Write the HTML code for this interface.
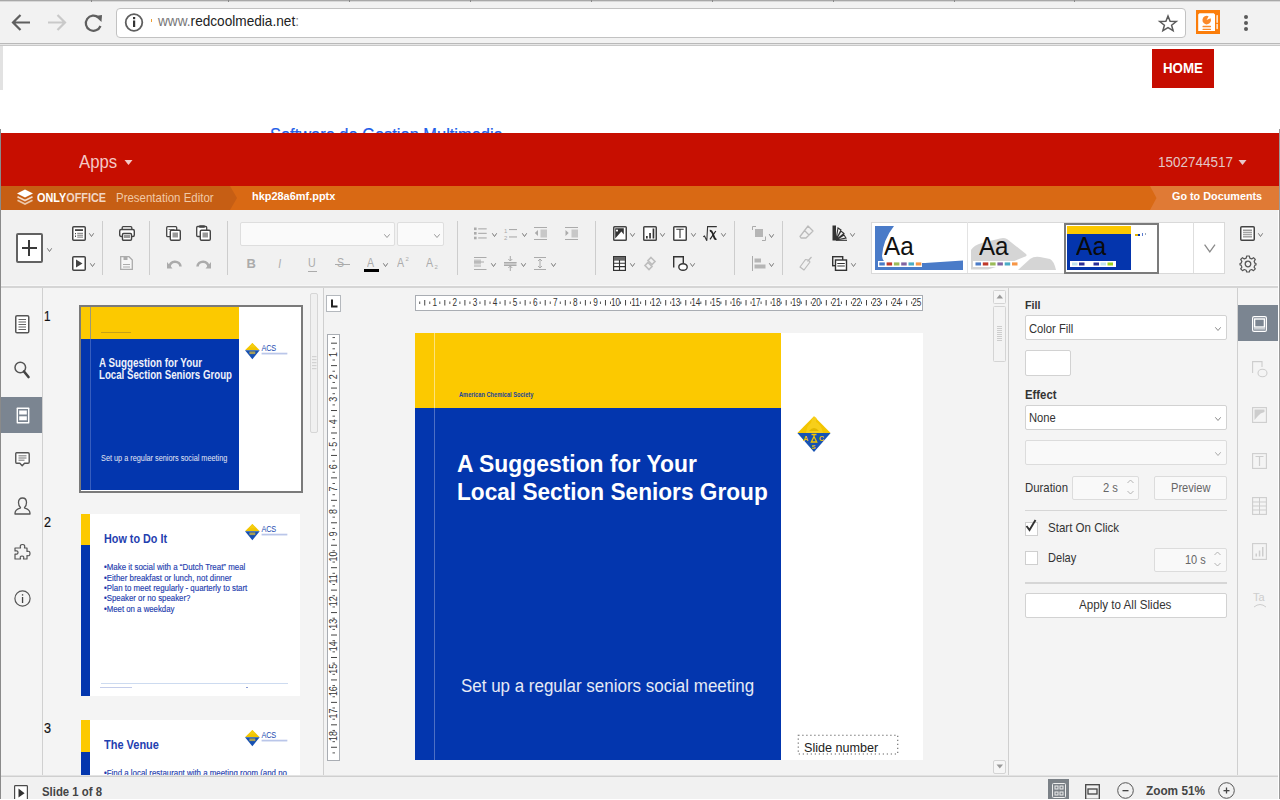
<!DOCTYPE html>
<html><head><meta charset="utf-8">
<style>
*{margin:0;padding:0;box-sizing:border-box}
html,body{width:1280px;height:800px;overflow:hidden;background:#fff;font-family:"Liberation Sans",sans-serif;position:relative}
.a{position:absolute}
.t{position:absolute;white-space:nowrap;line-height:1}
svg{position:absolute;overflow:visible}
</style></head><body>


<div class="a" style="left:0;top:0;width:1280px;height:44px;background:#f2f2f2"></div>
<div class="a" style="left:0;top:0;width:1280px;height:1px;background:#a8a8a8"></div>
<div class="a" style="left:0;top:1px;width:1280px;height:1px;background:#d8d8d8"></div>
<div class="a" style="left:91px;top:0;width:1px;height:2px;background:#8a8a8a"></div><div class="a" style="left:228px;top:0;width:1px;height:2px;background:#8a8a8a"></div><div class="a" style="left:349px;top:0;width:1px;height:2px;background:#8a8a8a"></div><div class="a" style="left:470px;top:0;width:1px;height:2px;background:#8a8a8a"></div><div class="a" style="left:591px;top:0;width:1px;height:2px;background:#8a8a8a"></div><div class="a" style="left:712px;top:0;width:1px;height:2px;background:#8a8a8a"></div><div class="a" style="left:833px;top:0;width:1px;height:2px;background:#8a8a8a"></div><div class="a" style="left:954px;top:0;width:1px;height:2px;background:#8a8a8a"></div><div class="a" style="left:1074px;top:0;width:1px;height:2px;background:#8a8a8a"></div>
<div class="a" style="left:0;top:43px;width:1280px;height:1px;background:#b9b9b9"></div>
<div class="a" style="left:0;top:44px;width:1280px;height:1px;background:#e6e6e6"></div>
<div class="a" style="left:0;top:45px;width:1280px;height:1px;background:#c8c8c8"></div>
<div class="a" style="left:116px;top:8px;width:1070px;height:30px;background:#fff;border:1px solid #c2c2c2;border-radius:4px"></div>
<svg style="left:0;top:0" width="200" height="44">
  <g fill="none" stroke="#5f5f5f" stroke-width="2.2"><path d="M30 22.5H13M20.5 15L13 22.5L20.5 30"/></g>
  <g fill="none" stroke="#c9c9c9" stroke-width="2.2"><path d="M48 22.5H65M57.5 15L65 22.5L57.5 30"/></g>
  <path d="M100.5 26 A7.6 7.6 0 1 1 98.5 17.5" fill="none" stroke="#5f5f5f" stroke-width="2.2"/>
  <path d="M95 16 L102 15 L101.5 22 Z" fill="#5f5f5f"/>
  <circle cx="134" cy="22.5" r="8.3" fill="none" stroke="#5f5f5f" stroke-width="1.8"/>
  <rect x="133" y="20.5" width="2.2" height="6.5" fill="#333"/>
  <rect x="133" y="17" width="2.2" height="2.2" fill="#333"/>
  <rect x="151" y="19" width="1" height="3" fill="#f0a030"/>
</svg>
<svg style="left:1159px;top:15px" width="19" height="17">
  <path d="M9 1 L11.1 6.2 L17.3 6.5 L12.6 10.2 L14.1 15.6 L9 12.6 L3.9 15.6 L5.4 10.2 L0.7 6.5 L6.9 6.2 Z" fill="none" stroke="#5a5a5a" stroke-width="1.5" stroke-linejoin="miter"/>
</svg>
<div class="a" style="left:1196px;top:10px;width:24px;height:24px;background:#fb7d0a"></div>
<svg style="left:1196px;top:10px" width="24" height="24">
  <path d="M2.2 4.5 L3.5 3.2 H17.8 L19 4.5 V21 H2.2 Z" fill="#fff"/>
  <path d="M10.6 10 L14.6 8.2 A4.3 4.3 0 1 1 12.6 6.2 Z" fill="#fb8a2a"/>
  <rect x="6.5" y="15.8" width="8.5" height="1.4" rx="0.5" fill="#fb8a2a"/>
  <rect x="6.5" y="18.7" width="8.5" height="1.3" rx="0.5" fill="#fb8a2a"/>
  <rect x="20.4" y="5" width="1.5" height="8" rx="0.7" fill="#fff" opacity="0.85"/>
  <rect x="20.4" y="13.8" width="1.5" height="5.5" rx="0.7" fill="#fff" opacity="0.85"/>
</svg>
<div class="a" style="left:1244px;top:15px;width:4px;height:4px;border-radius:2px;background:#5a5a5a"></div>
<div class="a" style="left:1244px;top:21px;width:4px;height:4px;border-radius:2px;background:#5a5a5a"></div>
<div class="a" style="left:1244px;top:27px;width:4px;height:4px;border-radius:2px;background:#5a5a5a"></div>

<div class="t" style="left:157.6px;top:14.0px;font-size:13.99px;color:#222;transform:scaleX(0.975);transform-origin:0 0;"><span style="color:#777">www.</span>redcoolmedia.net<span style="color:#888">:</span></div>

<div class="a" style="left:0;top:46px;width:3px;height:43.5px;background:#e2e2e2"></div>
<div class="a" style="left:1152px;top:49px;width:62px;height:39px;background:#c60c00"></div>

<div class="t" style="left:1163.0px;top:61.3px;font-size:14.40px;color:#fff;font-weight:bold;transform:scaleX(0.926);transform-origin:0 0;">HOME</div>
<div class="t" style="left:270.0px;top:126.9px;font-size:17.83px;color:#1f5ee8;transform:scaleX(0.921);transform-origin:0 0;-webkit-text-stroke:0.25px #1f5ee8;">Software de Gestion Multimedia</div>

<div class="a" style="left:0;top:133px;width:1280px;height:53px;background:#c70e00"></div>
<div class="a" style="left:0;top:186px;width:1280px;height:24px;background:#d96914"></div>
<svg style="left:0;top:186px" width="1280" height="24">
  <path d="M0 0 H230 L237 12 L230 24 H0 Z" fill="#c65e14"/>
  <path d="M1280 0 H1150 L1156.5 12 L1150 24 H1280 Z" fill="#e07a35"/>
</svg>
<svg style="left:16px;top:188px" width="18" height="18">
  <path d="M9 1.5 L17 5.5 L9 9.5 L1 5.5 Z" fill="#fff"/>
  <path d="M1.5 8.8 L9 12.6 L16.5 8.8" fill="none" stroke="#f4dccb" stroke-width="1.7"/>
  <path d="M1.5 12.2 L9 16 L16.5 12.2" fill="none" stroke="#ecc7a8" stroke-width="1.7"/>
</svg>
<svg style="left:122px;top:158px" width="12" height="8"><path d="M2.5 2 L10.5 2 L6.5 7 Z" fill="#f4c9c6"/></svg>
<svg style="left:1236px;top:158px" width="12" height="8"><path d="M2.5 2 L10.5 2 L6.5 7 Z" fill="#e8c8c8"/></svg>

<div class="t" style="left:78.8px;top:152.8px;font-size:18.86px;color:#f4c9c6;transform:scaleX(0.887);transform-origin:0 0;">Apps</div>
<div class="t" style="left:1158.0px;top:153.5px;font-size:15.36px;color:#e3c6c6;transform:scaleX(0.878);transform-origin:0 0;">1502744517</div>
<div class="t" style="left:37.4px;top:191.2px;font-size:13.31px;color:#fff;font-weight:bold;transform:scaleX(0.817);transform-origin:0 0;">ONLY<span style="color:#f2d6c4">OFFICE</span></div>
<div class="t" style="left:116.0px;top:191.8px;font-size:12.35px;color:#f1c9a6;transform:scaleX(0.930);transform-origin:0 0;">Presentation Editor</div>
<div class="t" style="left:251.6px;top:191.0px;font-size:11.52px;color:#fff;font-weight:bold;transform:scaleX(0.950);transform-origin:0 0;">hkp28a6mf.pptx</div>
<div class="t" style="left:1172.3px;top:190.9px;font-size:11.52px;color:#fff;font-weight:bold;transform:scaleX(0.939);transform-origin:0 0;">Go to Documents</div>

<div class="a" style="left:1px;top:210px;width:1277px;height:76px;background:#f1f1f1"></div>
<div class="a" style="left:1px;top:285px;width:1277px;height:1px;background:#f7f7f7"></div>
<div class="a" style="left:1px;top:286px;width:1277px;height:2px;background:#d5d5d5"></div>

<div class="a" style="left:16px;top:232.8px;width:27px;height:30.5px;background:#fff;border:2px solid #626262;border-radius:2px"></div>
<div class="a" style="left:22px;top:247px;width:14.5px;height:2px;background:#3a3a3a"></div>
<div class="a" style="left:28.2px;top:240px;width:2px;height:16px;background:#3a3a3a"></div>
<svg style="left:47px;top:248px" width="5" height="4"><path d="M0.3 0.3 L2.5 3.5 L4.7 0.3" fill="none" stroke="#7a7a7a" stroke-width="1"/></svg>
<svg style="left:72px;top:226px" width="14" height="15" viewBox="0 0 14 15"><rect x="0.75" y="0.75" width="12.5" height="13.5" rx="1" fill="#fff" stroke="#444" stroke-width="1.5"/><rect x="3" y="3.2" width="8" height="1.8" fill="#444"/><rect x="3" y="7" width="1" height="1.2" fill="#444"/><rect x="3" y="9.5" width="1" height="1.5" fill="#444"/><rect x="5.2" y="6.8" width="5.8" height="1" fill="#777"/><rect x="5.2" y="8.7" width="5.8" height="1" fill="#777"/><rect x="5.2" y="10.6" width="5.8" height="1" fill="#777"/></svg>
<svg style="left:89px;top:233px" width="5" height="4"><path d="M0.3 0.3 L2.5 3.5 L4.7 0.3" fill="none" stroke="#7a7a7a" stroke-width="1"/></svg>
<svg style="left:72px;top:256px" width="14" height="15" viewBox="0 0 14 15"><rect x="0.75" y="0.75" width="12.5" height="13.5" rx="1" fill="#fff" stroke="#444" stroke-width="1.5"/><path d="M4 3.5 L10.5 7.5 L4 11.5 Z" fill="#444"/></svg>
<svg style="left:90px;top:263px" width="5" height="4"><path d="M0.3 0.3 L2.5 3.5 L4.7 0.3" fill="none" stroke="#7a7a7a" stroke-width="1"/></svg>
<div class="a" style="left:102.3px;top:221px;width:1px;height:54px;background:#cdcdcd"></div>
<svg style="left:119px;top:226px" width="16" height="15" viewBox="0 0 16 15"><rect x="3.2" y="0.7" width="9.6" height="4" rx="1" fill="#fff" stroke="#444" stroke-width="1.3"/><rect x="0.7" y="3.5" width="14.6" height="7" rx="1.5" fill="#fff" stroke="#444" stroke-width="1.4"/><rect x="3.5" y="7.5" width="9" height="6.8" rx="1" fill="#fff" stroke="#444" stroke-width="1.4"/><rect x="5" y="9" width="6" height="3" fill="#999"/></svg>
<svg style="left:120px;top:256px" width="13" height="14" viewBox="0 0 13 14"><path d="M0.7 0.7 H9 L12.3 4 V13.3 H0.7 Z" fill="#f6f6f6" stroke="#ababab" stroke-width="1.3"/><rect x="3.5" y="1" width="4" height="3" fill="#ababab"/><rect x="3" y="8" width="7" height="1" fill="#ababab"/><rect x="3" y="10.5" width="7" height="1" fill="#ababab"/></svg>
<div class="a" style="left:149.2px;top:221px;width:1px;height:54px;background:#cdcdcd"></div>
<svg style="left:166px;top:226px" width="15" height="15" viewBox="0 0 15 15"><rect x="0.7" y="0.7" width="10" height="10" rx="1" fill="#fff" stroke="#444" stroke-width="1.3"/><rect x="2.5" y="3" width="6" height="1" fill="#777"/><rect x="4.3" y="4.3" width="10" height="10" rx="1.2" fill="#fff" stroke="#444" stroke-width="1.4"/><rect x="6.5" y="6.5" width="5.5" height="5" fill="#999"/></svg>
<svg style="left:196px;top:225px" width="15" height="16" viewBox="0 0 15 16"><rect x="0.7" y="1.5" width="10" height="10" rx="1" fill="#fff" stroke="#444" stroke-width="1.3"/><rect x="3" y="0.3" width="6" height="2.5" rx="1" fill="#444"/><rect x="4.3" y="5.3" width="10" height="10" rx="1.2" fill="#fff" stroke="#444" stroke-width="1.4"/><rect x="6.5" y="7.5" width="5.5" height="5" fill="#999"/></svg>
<svg style="left:167px;top:260px" width="15" height="9" viewBox="0 0 15 9"><path d="M2.5 7 A5.5 5 0 0 1 13.5 6.5" fill="none" stroke="#ababab" stroke-width="2.6"/><path d="M0 2 L0 8.5 L5.5 8.5 Z" fill="#ababab"/></svg>
<svg style="left:196px;top:260px" width="15" height="9" viewBox="0 0 15 9"><path d="M12.5 7 A5.5 5 0 0 0 1.5 6.5" fill="none" stroke="#ababab" stroke-width="2.6"/><path d="M15 2 L15 8.5 L9.5 8.5 Z" fill="#ababab"/></svg>
<div class="a" style="left:226.9px;top:221px;width:1px;height:54px;background:#cdcdcd"></div>
<div class="a" style="left:240px;top:222px;width:155px;height:24px;background:#fafafa;border:1px solid #dedede;border-radius:2px"></div>
<div class="a" style="left:397px;top:222px;width:47px;height:24px;background:#fafafa;border:1px solid #dedede;border-radius:2px"></div>
<svg style="left:384px;top:234px" width="6" height="4"><path d="M0.3 0.3 L3.0 3.5 L5.7 0.3" fill="none" stroke="#999" stroke-width="1"/></svg>
<svg style="left:434px;top:234px" width="6" height="4"><path d="M0.3 0.3 L3.0 3.5 L5.7 0.3" fill="none" stroke="#999" stroke-width="1"/></svg>
<div class="t" style="left:246.5px;top:257px;font-size:13px;font-weight:bold;color:#ababab">B</div>
<div class="t" style="left:278px;top:257px;font-size:13px;font-style:italic;color:#ababab;transform:scaleX(.8)">I</div>
<div class="t" style="left:307.5px;top:256.5px;font-size:12.5px;color:#ababab;transform:scaleX(.85);transform-origin:0 0">U</div>
<div class="a" style="left:307.5px;top:271px;width:9px;height:1px;background:#ababab"></div>
<div class="t" style="left:337px;top:256.5px;font-size:12.5px;color:#ababab;transform:scaleX(.85);transform-origin:0 0">S</div>
<div class="a" style="left:334.5px;top:263.5px;width:15px;height:1.2px;background:#ababab"></div>
<div class="t" style="left:366.5px;top:257.2px;font-size:12.5px;color:#ababab;transform:scaleX(.85);transform-origin:0 0">A</div>
<div class="a" style="left:364px;top:269.2px;width:15px;height:3px;background:#000"></div>
<svg style="left:383px;top:263px" width="5" height="4"><path d="M0.3 0.3 L2.5 3.5 L4.7 0.3" fill="none" stroke="#7a7a7a" stroke-width="1"/></svg>
<div class="t" style="left:397px;top:256.5px;font-size:12.5px;color:#ababab;transform:scaleX(.85);transform-origin:0 0">A</div>
<div class="t" style="left:405.5px;top:256px;font-size:6px;color:#ababab">2</div>
<div class="t" style="left:426px;top:256.5px;font-size:12.5px;color:#ababab;transform:scaleX(.85);transform-origin:0 0">A</div>
<div class="t" style="left:434.5px;top:263.5px;font-size:6px;color:#ababab">2</div>
<div class="a" style="left:456.5px;top:221px;width:1px;height:54px;background:#cdcdcd"></div>
<svg style="left:474px;top:227px" width="13" height="13" viewBox="0 0 13 13"><rect x="0" y="0.5" width="2.6" height="2.6" fill="#ababab"/><rect x="0" y="5" width="2.6" height="2.6" fill="#ababab"/><rect x="0" y="9.7" width="2.6" height="2.6" fill="#ababab"/><rect x="4.2" y="1.3" width="8.5" height="1.1" fill="#ababab"/><rect x="4.2" y="5.8" width="8.5" height="1.1" fill="#ababab"/><rect x="4.2" y="10.4" width="8.5" height="1.1" fill="#ababab"/></svg>
<svg style="left:492px;top:233px" width="5" height="4"><path d="M0.3 0.3 L2.5 3.5 L4.7 0.3" fill="none" stroke="#7a7a7a" stroke-width="1"/></svg>
<svg style="left:504px;top:227px" width="14" height="13" viewBox="0 0 14 13"><text x="0" y="5.5" font-size="6" fill="#ababab" font-family="Liberation Sans">1</text><text x="0" y="12.8" font-size="6" fill="#ababab" font-family="Liberation Sans">2</text><rect x="5" y="2" width="8" height="1.1" fill="#ababab"/><rect x="5" y="9.4" width="8" height="1.1" fill="#ababab"/></svg>
<svg style="left:522px;top:233px" width="5" height="4"><path d="M0.3 0.3 L2.5 3.5 L4.7 0.3" fill="none" stroke="#7a7a7a" stroke-width="1"/></svg>
<svg style="left:534px;top:227px" width="13" height="13" viewBox="0 0 13 13"><rect x="0" y="0" width="13" height="1" fill="#ababab"/><rect x="0" y="12" width="13" height="1" fill="#ababab"/><path d="M4 3 V9 L0.8 6 Z" fill="#ababab"/><rect x="6.5" y="2.5" width="6.5" height="8" fill="#c8c8c8"/></svg>
<svg style="left:565px;top:227px" width="13" height="13" viewBox="0 0 13 13"><rect x="0" y="0" width="13" height="1" fill="#ababab"/><rect x="0" y="12" width="13" height="1" fill="#ababab"/><path d="M0.5 3 V9 L3.7 6 Z" fill="#ababab"/><rect x="6.5" y="2.5" width="6.5" height="8" fill="#c8c8c8"/></svg>
<svg style="left:474px;top:257px" width="13" height="13" viewBox="0 0 13 13"><rect x="0" y="0" width="12.5" height="1" fill="#ababab"/><rect x="0" y="2.5" width="7" height="5" fill="#c8c8c8"/><rect x="0" y="4.5" width="10" height="1" fill="#ababab"/><rect x="0" y="8.5" width="7" height="1" fill="#ababab"/><rect x="0" y="12" width="12.5" height="1" fill="#ababab"/></svg>
<svg style="left:491px;top:263px" width="5" height="4"><path d="M0.3 0.3 L2.5 3.5 L4.7 0.3" fill="none" stroke="#7a7a7a" stroke-width="1"/></svg>
<svg style="left:504px;top:256px" width="13" height="15" viewBox="0 0 13 15"><rect x="0" y="6" width="12.5" height="3" fill="#c8c8c8"/><rect x="0" y="6" width="12.5" height="1" fill="#ababab"/><rect x="0" y="9" width="12.5" height="1" fill="#ababab"/><path d="M6.3 0 V5 M4.3 3 L6.3 5 L8.3 3 M6.3 15 V10 M4.3 12 L6.3 10 L8.3 12" fill="none" stroke="#ababab" stroke-width="1"/></svg>
<svg style="left:521px;top:263px" width="5" height="4"><path d="M0.3 0.3 L2.5 3.5 L4.7 0.3" fill="none" stroke="#7a7a7a" stroke-width="1"/></svg>
<svg style="left:534px;top:257px" width="12" height="13" viewBox="0 0 12 13"><rect x="0" y="0" width="12" height="1" fill="#ababab"/><rect x="0" y="12" width="12" height="1" fill="#ababab"/><path d="M6 2 V11 M4 4 L6 2 L8 4 M4 9 L6 11 L8 9" fill="none" stroke="#ababab" stroke-width="1"/></svg>
<svg style="left:551px;top:263px" width="5" height="4"><path d="M0.3 0.3 L2.5 3.5 L4.7 0.3" fill="none" stroke="#7a7a7a" stroke-width="1"/></svg>
<div class="a" style="left:595.1px;top:221px;width:1px;height:54px;background:#cdcdcd"></div>
<svg style="left:613px;top:226px" width="14" height="15" viewBox="0 0 14 15"><rect x="0.75" y="0.75" width="12.5" height="13.5" rx="0.8" fill="#fff" stroke="#444" stroke-width="1.5"/><path d="M2.2 2.3 H10.8 V8.6 L8.4 5.5 L2.2 12.6 Z" fill="#333"/><circle cx="4" cy="4.6" r="1.1" fill="#fff"/></svg>
<svg style="left:629.5px;top:232.5px" width="5" height="4"><path d="M0.3 0.3 L2.5 3.5 L4.7 0.3" fill="none" stroke="#7a7a7a" stroke-width="1"/></svg>
<svg style="left:643px;top:226px" width="14" height="15" viewBox="0 0 14 15"><rect x="0.75" y="0.75" width="12.5" height="13.5" rx="0.8" fill="#fff" stroke="#444" stroke-width="1.5"/><rect x="3" y="10" width="1.7" height="2.5" fill="#333"/><rect x="6.2" y="7" width="1.7" height="5.5" fill="#333"/><rect x="9.6" y="2.5" width="1.7" height="10" fill="#333"/></svg>
<svg style="left:660px;top:232.5px" width="5" height="4"><path d="M0.3 0.3 L2.5 3.5 L4.7 0.3" fill="none" stroke="#7a7a7a" stroke-width="1"/></svg>
<svg style="left:673px;top:226px" width="14" height="15" viewBox="0 0 14 15"><rect x="0.75" y="0.75" width="12.5" height="13.5" rx="0.8" fill="#fff" stroke="#444" stroke-width="1.5"/><path d="M3.3 3.3 H10.7 M7 3.3 V12" stroke="#333" stroke-width="1.1" fill="none"/></svg>
<svg style="left:691px;top:232.5px" width="5" height="4"><path d="M0.3 0.3 L2.5 3.5 L4.7 0.3" fill="none" stroke="#7a7a7a" stroke-width="1"/></svg>
<svg style="left:703px;top:226px" width="15" height="16" viewBox="0 0 15 16"><path d="M0.3 10.8 L1.5 10 L3.8 14.8 L4.6 0.6 H13.8" fill="none" stroke="#333" stroke-width="1.1"/><path d="M6.8 4.8 Q8.5 4.5 9.5 7 L11.5 12 Q12.2 13.5 13.4 13" fill="none" stroke="#222" stroke-width="1.9"/><path d="M12.8 5 L7 13.3" fill="none" stroke="#222" stroke-width="1.2"/></svg>
<svg style="left:721px;top:232.5px" width="5" height="4"><path d="M0.3 0.3 L2.5 3.5 L4.7 0.3" fill="none" stroke="#7a7a7a" stroke-width="1"/></svg>
<svg style="left:613px;top:256px" width="13" height="15" viewBox="0 0 13 15"><rect x="0.6" y="0.6" width="11.8" height="13.8" fill="#fff" stroke="#333" stroke-width="1.2"/><path d="M6.5 0.6 V14.4 M0.6 4 H12.4 M0.6 7.2 H12.4 M0.6 10.6 H12.4" stroke="#333" stroke-width="1.1"/><rect x="1" y="1" width="11" height="3" fill="#666"/></svg>
<svg style="left:629.5px;top:262.5px" width="5" height="4"><path d="M0.3 0.3 L2.5 3.5 L4.7 0.3" fill="none" stroke="#7a7a7a" stroke-width="1"/></svg>
<svg style="left:643px;top:256px" width="14" height="15" viewBox="0 0 14 15"><g fill="none" stroke="#bdbdbd" stroke-width="1.6"><path d="M8 1.5 L12 5.5 L9 8.5 L5 4.5 Z"/><path d="M5 6.5 L9 10.5 L6 13.5 L2 9.5 Z"/></g></svg>
<svg style="left:673px;top:256px" width="15" height="15" viewBox="0 0 15 15"><path d="M0.7 11.5 V0.7 H10.3 V7" fill="none" stroke="#333" stroke-width="1.4"/><ellipse cx="10" cy="11" rx="4.2" ry="3.3" fill="#fff" stroke="#333" stroke-width="1.4"/></svg>
<svg style="left:690px;top:262.5px" width="5" height="4"><path d="M0.3 0.3 L2.5 3.5 L4.7 0.3" fill="none" stroke="#7a7a7a" stroke-width="1"/></svg>
<div class="a" style="left:734px;top:221px;width:1px;height:54px;background:#cdcdcd"></div>
<svg style="left:752px;top:226px" width="14" height="15" viewBox="0 0 14 15"><path d="M0.5 4 V0.5 H4 M13.5 10.5 V14.5 H10" fill="none" stroke="#ababab" stroke-width="1"/><rect x="3" y="3" width="8" height="8" fill="#b5b5b5"/></svg>
<svg style="left:769px;top:234px" width="5" height="4"><path d="M0.3 0.3 L2.5 3.5 L4.7 0.3" fill="none" stroke="#7a7a7a" stroke-width="1"/></svg>
<svg style="left:752px;top:256px" width="14" height="15" viewBox="0 0 14 15"><rect x="0" y="0" width="1" height="15" fill="#ababab"/><rect x="2.5" y="2.5" width="6.5" height="4" fill="#b5b5b5"/><rect x="2.5" y="8.5" width="11" height="4" fill="#b5b5b5"/></svg>
<svg style="left:769px;top:263px" width="5" height="4"><path d="M0.3 0.3 L2.5 3.5 L4.7 0.3" fill="none" stroke="#7a7a7a" stroke-width="1"/></svg>
<div class="a" style="left:781.8px;top:221px;width:1px;height:54px;background:#cdcdcd"></div>
<svg style="left:799px;top:225px" width="15" height="15" viewBox="0 0 15 15"><path d="M9 1 L14 6 L7 13 L2 13 L1 11.5 Z M5 5 L10 10" fill="none" stroke="#bbb" stroke-width="1.3" stroke-linejoin="round"/></svg>
<svg style="left:832px;top:225px" width="16" height="16" viewBox="0 0 16 16"><rect x="0.5" y="0.5" width="3.5" height="15" fill="#333"/><path d="M4 15 L6 3 L9 5 Z M4 15 L9 6 L12 8.5 Z M4 15 L12 10 L14 13 Z" fill="none" stroke="#333" stroke-width="1.1"/><path d="M4 15.3 H15" stroke="#333" stroke-width="1.1"/></svg>
<svg style="left:850px;top:233px" width="5" height="4"><path d="M0.3 0.3 L2.5 3.5 L4.7 0.3" fill="none" stroke="#7a7a7a" stroke-width="1"/></svg>
<svg style="left:799px;top:256px" width="14" height="15" viewBox="0 0 14 15"><path d="M12.5 1 L8.5 5.5 M9.5 4 L11 6 L5 14 L1 11 L6.5 3.5 Z" fill="none" stroke="#bbb" stroke-width="1.2" stroke-linejoin="round"/></svg>
<svg style="left:832px;top:256px" width="15" height="15" viewBox="0 0 15 15"><rect x="0.7" y="0.7" width="10" height="9" fill="none" stroke="#333" stroke-width="1.4"/><rect x="3.5" y="4" width="11" height="10.3" fill="#fff" stroke="#333" stroke-width="1.4"/><rect x="5.3" y="7" width="7.5" height="1" fill="#333"/><rect x="5.3" y="9.5" width="7.5" height="1" fill="#333"/></svg>
<svg style="left:851px;top:263px" width="5" height="4"><path d="M0.3 0.3 L2.5 3.5 L4.7 0.3" fill="none" stroke="#7a7a7a" stroke-width="1"/></svg>
<div class="a" style="left:871px;top:221.5px;width:353.5px;height:52px;background:#fff;border:1px solid #d9d9d9"></div>
<svg style="left:875px;top:226px" width="89" height="44" viewBox="0 0 89 44"><path d="M0 0 H19 Q8 14 7 30 Q7.5 36 13 37 H50 L88 34.5 V44 H0 Z" fill="#4a7bc8"/><rect x="3" y="35" width="44" height="6" fill="#fff"/><rect x="4.3" y="36.4" width="5.5" height="3.1" fill="#4a7bc8"/><rect x="11.6" y="36.4" width="5.5" height="3.1" fill="#c0392b"/><rect x="18.9" y="36.4" width="5.5" height="3.1" fill="#9bbb59"/><rect x="26.2" y="36.4" width="5.5" height="3.1" fill="#8064a2"/><rect x="33.5" y="36.4" width="5.5" height="3.1" fill="#4bacc6"/><rect x="40.8" y="36.4" width="5.5" height="3.1" fill="#f79646"/></svg>
<div class="t" style="left:883.6px;top:233.3px;font-size:26.20px;color:#111;transform:scaleX(0.925);transform-origin:0 0;">Aa</div>
<div class="a" style="left:967px;top:222px;width:1px;height:51px;background:#e3e3e3"></div>
<svg style="left:968px;top:226px" width="92" height="44" viewBox="0 0 92 44"><path d="M3 24 Q6 19 14 17 L32 12.5 Q36 11.5 39 13 L58 28 Q60 30 56 31 L44 36 L20 43.5 H3 Z" fill="#d5d5d5"/><path d="M50 44 L62 33 Q66 30 72 31 L82 33 Q86 35 88 44 Z" fill="#d5d5d5"/><rect x="5" y="35" width="43" height="6" fill="#fff"/><rect x="7.5" y="36.4" width="5.5" height="3.1" fill="#4a7bc8"/><rect x="14.8" y="36.4" width="5.5" height="3.1" fill="#c0392b"/><rect x="22.1" y="36.4" width="5.5" height="3.1" fill="#9bbb59"/><rect x="29.4" y="36.4" width="5.5" height="3.1" fill="#8064a2"/><rect x="36.7" y="36.4" width="5.5" height="3.1" fill="#4bacc6"/><rect x="44.0" y="36.4" width="5.5" height="3.1" fill="#f79646"/></svg>
<div class="t" style="left:979.0px;top:233.3px;font-size:26.20px;color:#111;transform:scaleX(0.922);transform-origin:0 0;">Aa</div>
<div class="a" style="left:1064px;top:222.5px;width:95px;height:51px;background:#fff;border:2px solid #7b7b7b"></div>
<div class="a" style="left:1067px;top:226px;width:64px;height:8px;background:#fcc800"></div>
<div class="a" style="left:1067px;top:234px;width:64px;height:36px;background:#0435ad"></div>
<div class="t" style="left:1075.7px;top:233.9px;font-size:25.79px;color:#0a0a0a;transform:scaleX(0.956);transform-origin:0 0;">Aa</div>
<svg style="left:1070px;top:261px" width="46" height="6" viewBox="0 0 46 6"><rect x="0" y="0" width="46" height="6" fill="#fff"/><rect x="2" y="1.5" width="5.5" height="3" fill="#bfe4ee"/><rect x="9" y="1.5" width="5.5" height="3" fill="#2a2e96"/><rect x="23.5" y="1.5" width="5.5" height="3" fill="#2a2e96"/><rect x="30.5" y="1.5" width="5.5" height="3" fill="#bfe4ee"/><rect x="37.5" y="1.5" width="5.5" height="3" fill="#9bd21e"/></svg>
<svg style="left:1135px;top:233px" width="14" height="4" viewBox="0 0 14 4"><rect x="0" y="1" width="3" height="2" fill="#e0b000"/><rect x="3" y="1" width="2" height="2" fill="#0435ad"/><rect x="7" y="0" width="1" height="3" fill="#5a7bd0"/><rect x="10" y="0" width="1" height="2" fill="#9ab"/></svg>
<div class="a" style="left:1193px;top:222px;width:1px;height:51px;background:#dedede"></div>
<svg style="left:1204px;top:244px" width="12" height="9" viewBox="0 0 12 9"><path d="M0.6 0.6 L5.8 7.8 L11 0.6" fill="none" stroke="#8a8a8a" stroke-width="1.3"/></svg>
<svg style="left:1240px;top:226px" width="15" height="15" viewBox="0 0 15 15"><rect x="0.75" y="0.75" width="13.5" height="13.5" rx="1" fill="#fff" stroke="#444" stroke-width="1.5"/><rect x="3" y="3.5" width="9" height="8" fill="#9a9a9a"/><rect x="3" y="5.3" width="9" height="0.8" fill="#fff"/><rect x="3" y="7.3" width="9" height="0.8" fill="#fff"/><rect x="3" y="9.3" width="9" height="0.8" fill="#fff"/></svg>
<svg style="left:1258px;top:233px" width="5" height="4"><path d="M0.3 0.3 L2.5 3.5 L4.7 0.3" fill="none" stroke="#7a7a7a" stroke-width="1"/></svg>
<svg style="left:1240px;top:255px" width="16" height="17" viewBox="0 0 16 17"><g transform="translate(8 8.5)"><path d="M-1.3 -7.5 H1.3 L1.8 -5.4 L3.7 -4.6 L5.5 -5.8 L7.3 -4 L6.1 -2.2 L6.9 -0.3 L8 0 V1.3 L6.9 1.6 L6.1 3.6 L7.3 5.4 L5.5 7.2 L3.7 6 L1.8 6.8 L1.3 8.5 H-1.3 L-1.8 6.8 L-3.7 6 L-5.5 7.2 L-7.3 5.4 L-6.1 3.6 L-6.9 1.6 L-8 1.3 V0 L-6.9 -0.3 L-6.1 -2.2 L-7.3 -4 L-5.5 -5.8 L-3.7 -4.6 L-1.8 -5.4 Z" fill="none" stroke="#555" stroke-width="1.2" stroke-linejoin="round"/><circle cx="0" cy="0.5" r="2.8" fill="none" stroke="#555" stroke-width="1.3"/></g></svg>
<div class="a" style="left:1px;top:288px;width:41px;height:487px;background:#f4f4f4"></div>
<div class="a" style="left:42px;top:288px;width:1px;height:487px;background:#d0d0d0"></div>
<div class="a" style="left:1px;top:396.5px;width:41px;height:36px;background:#7b8591"></div>
<svg style="left:15px;top:315px" width="15" height="19" viewBox="0 0 15 19"><rect x="0.75" y="0.75" width="13" height="17" rx="1.3" fill="#fff" stroke="#555" stroke-width="1.5"/><rect x="3.5" y="4" width="7.5" height="1" fill="#666"/><rect x="3.5" y="6.5" width="7.5" height="1" fill="#666"/><rect x="3.5" y="9" width="7.5" height="1" fill="#666"/><rect x="3.5" y="11.5" width="7.5" height="1" fill="#666"/><rect x="3.5" y="14" width="7.5" height="1" fill="#666"/></svg>
<svg style="left:14px;top:361px" width="16" height="18" viewBox="0 0 16 18"><circle cx="6.3" cy="6.5" r="5.3" fill="none" stroke="#555" stroke-width="1.5"/><path d="M10 10.5 L14.5 16" stroke="#444" stroke-width="2.6" stroke-linecap="round"/></svg>
<svg style="left:16px;top:407px" width="14" height="17" viewBox="0 0 14 17"><rect x="0.6" y="0.6" width="12.8" height="15.8" rx="0.6" fill="#fff"/><rect x="2" y="2" width="10" height="13" fill="#7b8591"/><rect x="3.2" y="3.5" width="7.6" height="4" fill="#fff"/><rect x="3.2" y="9.3" width="7.6" height="4" fill="#fff"/></svg>
<svg style="left:15px;top:452px" width="15" height="16" viewBox="0 0 15 16"><path d="M1.5 0.75 H13 Q14.2 0.75 14.2 2 V10 Q14.2 11.2 13 11.2 H9.5 L7.2 13.8 L4.9 11.2 H1.5 Q0.75 11.2 0.75 10 V2 Q0.75 0.75 1.5 0.75 Z" fill="#fff" stroke="#555" stroke-width="1.4" stroke-linejoin="round"/><rect x="3.5" y="3.2" width="8" height="1.2" fill="#888"/><rect x="3.5" y="5.4" width="8" height="1.2" fill="#888"/><rect x="3.5" y="7.6" width="6" height="1.2" fill="#888"/></svg>
<svg style="left:14px;top:497px" width="17" height="18" viewBox="0 0 17 18"><path d="M8.5 1 Q12.5 1 12.5 5.5 Q12.5 9 10.5 10.5 L10.8 11.2 Q16 12.5 16 16.5 V17 H1 V16.5 Q1 12.5 6.2 11.2 L6.5 10.5 Q4.5 9 4.5 5.5 Q4.5 1 8.5 1 Z" fill="none" stroke="#555" stroke-width="1.3" stroke-linejoin="round"/></svg>
<svg style="left:14px;top:542px" width="17" height="19" viewBox="0 0 17 19"><path d="M4 4.5 H6.5 Q5.5 1 8.5 1 Q11.5 1 10.5 4.5 H13 V8 Q16 7 16 10 Q16 13 13 12 V15.5 H9.5 Q10.5 12.5 8 12.5 Q5.5 12.5 6.5 15.5 H1 V10.5 Q4 11.2 4 9 Q4 6.8 1 7.5 V4.5 Z" fill="none" stroke="#555" stroke-width="1.2" stroke-linejoin="round" transform="translate(0 1.5)"/></svg>
<svg style="left:14px;top:590px" width="17" height="17" viewBox="0 0 17 17"><circle cx="8.5" cy="8.5" r="7.6" fill="none" stroke="#555" stroke-width="1.2"/><rect x="7.9" y="7" width="1.3" height="6" fill="#444"/><rect x="7.9" y="4.2" width="1.3" height="1.4" fill="#444"/></svg>
<div class="a" style="left:43px;top:288px;width:280px;height:487px;background:#f4f4f4;overflow:hidden"></div>
<div class="a" style="left:323px;top:288px;width:1px;height:487px;background:#cfcfcf"></div>
<div class="a" style="left:309.5px;top:293px;width:8px;height:140px;background:#f0f0f0;border:1px solid #d6d6d6;border-radius:2px"></div>
<svg style="left:311.5px;top:356px" width="5" height="16" viewBox="0 0 5 16"><rect x="0" y="0" width="4.5" height="1.2" fill="#d2d2d2"/><rect x="0" y="3" width="4.5" height="1.2" fill="#d2d2d2"/><rect x="0" y="6" width="4.5" height="1.2" fill="#d2d2d2"/><rect x="0" y="9" width="4.5" height="1.2" fill="#d2d2d2"/><rect x="0" y="12" width="4.5" height="1.2" fill="#d2d2d2"/></svg>
<div class="t" style="left:43.5px;top:308.5px;font-size:14.27px;color:#111;transform:scaleX(0.821);transform-origin:0 0;-webkit-text-stroke:0.2px #111;">1</div>
<div class="t" style="left:43.5px;top:515.9px;font-size:13.85px;color:#111;transform:scaleX(0.910);transform-origin:0 0;-webkit-text-stroke:0.2px #111;">2</div>
<div class="t" style="left:43.5px;top:721.1px;font-size:14.40px;color:#111;transform:scaleX(0.876);transform-origin:0 0;-webkit-text-stroke:0.2px #111;">3</div>
<div class="a" style="left:78.5px;top:304.5px;width:224.5px;height:188px;border:2px solid #7a7a7a;background:#fff"></div>
<div class="a" style="left:81px;top:307px;width:158px;height:32px;background:#fcc900"></div>
<div class="a" style="left:81px;top:339px;width:158px;height:151px;background:#0336ae"></div>
<div class="a" style="left:90px;top:307px;width:1px;height:183px;background:#5a79c8;opacity:.6"></div>
<div class="a" style="left:101px;top:331.5px;width:30px;height:1.5px;background:#b09020;opacity:.7"></div>
<div class="t" style="left:99.0px;top:357.0px;font-size:12.35px;color:#f0f2fa;font-weight:bold;transform:scaleX(0.796);transform-origin:0 0;">A Suggestion for Your</div>
<div class="t" style="left:99.0px;top:369.0px;font-size:12.35px;color:#f0f2fa;font-weight:bold;transform:scaleX(0.785);transform-origin:0 0;">Local Section Seniors Group</div>
<div class="t" style="left:100.5px;top:452.9px;font-size:9.60px;color:#e4e8f4;transform:scaleX(0.762);transform-origin:0 0;">Set up a regular seniors social meeting</div>
<svg style="left:245.3px;top:342.5px" width="46" height="18" viewBox="0 0 46 18"><path d="M0 7.276500000000001 L7.35 -0.07349999999999834 L14.7 7.276500000000001 Z" fill="#f2c500"/><path d="M4.409999999999999 4.365900000000001 L6.615 1.0914750000000002 L7.35 0 L8.379 1.0914750000000002 L10.29 4.365900000000001 Z" fill="#f5cd10"/><path d="M0 7.276500000000001 L14.7 7.276500000000001 L7.35 16.17 Z" fill="#1550b4"/><rect x="4.409999999999999" y="8.4525" width="5.88" height="2.646" fill="#c9b040" opacity="0.8"/><text x="0" y="0" font-size="9.408" fill="#1a48b0" font-family="Liberation Sans" transform="translate(16.610999999999997 8.232000000000001) scale(0.78 1.05)" letter-spacing="-0.3">ACS</text><rect x="16.610999999999997" y="9.702" width="25.724999999999998" height="1.7639999999999998" fill="#3a5cc0" opacity="0.35"/></svg>
<div class="a" style="left:81px;top:514px;width:218.5px;height:182px;background:#fff"></div>
<div class="a" style="left:81px;top:514px;width:9px;height:31px;background:#fcc900"></div>
<div class="a" style="left:81px;top:545px;width:9px;height:151px;background:#0336ae"></div>
<div class="t" style="left:103.5px;top:532.9px;font-size:12.48px;color:#1f40b0;font-weight:bold;transform:scaleX(0.866);transform-origin:0 0;">How to Do It</div>
<div class="t" style="left:103.5px;top:561.9px;font-size:9.60px;color:#1d3cae;transform:scaleX(0.825);transform-origin:0 0;-webkit-text-stroke:0.15px #1d3cae;">•Make it social with a “Dutch Treat” meal</div>
<div class="t" style="left:103.5px;top:572.5px;font-size:9.60px;color:#1d3cae;transform:scaleX(0.822);transform-origin:0 0;-webkit-text-stroke:0.15px #1d3cae;">•Either breakfast or lunch, not dinner</div>
<div class="t" style="left:103.5px;top:582.9px;font-size:9.60px;color:#1d3cae;transform:scaleX(0.821);transform-origin:0 0;-webkit-text-stroke:0.15px #1d3cae;">•Plan to meet regularly - quarterly to start</div>
<div class="t" style="left:103.5px;top:593.4px;font-size:9.60px;color:#1d3cae;transform:scaleX(0.817);transform-origin:0 0;-webkit-text-stroke:0.15px #1d3cae;">•Speaker or no speaker?</div>
<div class="t" style="left:103.5px;top:604.4px;font-size:9.60px;color:#1d3cae;transform:scaleX(0.814);transform-origin:0 0;-webkit-text-stroke:0.15px #1d3cae;">•Meet on a weekday</div>
<svg style="left:245.3px;top:524px" width="46" height="18" viewBox="0 0 46 18"><path d="M0 7.276500000000001 L7.35 -0.07349999999999834 L14.7 7.276500000000001 Z" fill="#f2c500"/><path d="M4.409999999999999 4.365900000000001 L6.615 1.0914750000000002 L7.35 0 L8.379 1.0914750000000002 L10.29 4.365900000000001 Z" fill="#f5cd10"/><path d="M0 7.276500000000001 L14.7 7.276500000000001 L7.35 16.17 Z" fill="#1550b4"/><rect x="4.409999999999999" y="8.4525" width="5.88" height="2.646" fill="#c9b040" opacity="0.8"/><text x="0" y="0" font-size="9.408" fill="#1a48b0" font-family="Liberation Sans" transform="translate(16.610999999999997 8.232000000000001) scale(0.78 1.05)" letter-spacing="-0.3">ACS</text><rect x="16.610999999999997" y="9.702" width="25.724999999999998" height="1.7639999999999998" fill="#3a5cc0" opacity="0.35"/></svg>
<div class="a" style="left:101px;top:683px;width:187px;height:1px;background:#cddbf0"></div>
<div class="a" style="left:100px;top:687px;width:32px;height:1px;background:#3a5ab8;opacity:.3"></div>
<div class="a" style="left:246px;top:686.5px;width:1.5px;height:1.5px;background:#3a5ab8;opacity:.6"></div>
<div class="a" style="left:81px;top:720px;width:218.5px;height:55px;background:#fff"></div>
<div class="a" style="left:81px;top:720px;width:9px;height:32px;background:#fcc900"></div>
<div class="a" style="left:81px;top:752px;width:9px;height:23px;background:#0336ae"></div>
<div class="t" style="left:103.5px;top:738.9px;font-size:12.48px;color:#1f40b0;font-weight:bold;transform:scaleX(0.881);transform-origin:0 0;">The Venue</div>
<svg style="left:245.3px;top:730px" width="46" height="18" viewBox="0 0 46 18"><path d="M0 7.276500000000001 L7.35 -0.07349999999999834 L14.7 7.276500000000001 Z" fill="#f2c500"/><path d="M4.409999999999999 4.365900000000001 L6.615 1.0914750000000002 L7.35 0 L8.379 1.0914750000000002 L10.29 4.365900000000001 Z" fill="#f5cd10"/><path d="M0 7.276500000000001 L14.7 7.276500000000001 L7.35 16.17 Z" fill="#1550b4"/><rect x="4.409999999999999" y="8.4525" width="5.88" height="2.646" fill="#c9b040" opacity="0.8"/><text x="0" y="0" font-size="9.408" fill="#1a48b0" font-family="Liberation Sans" transform="translate(16.610999999999997 8.232000000000001) scale(0.78 1.05)" letter-spacing="-0.3">ACS</text><rect x="16.610999999999997" y="9.702" width="25.724999999999998" height="1.7639999999999998" fill="#3a5cc0" opacity="0.35"/></svg>
<div style="position:absolute;left:43px;top:765px;width:256.5px;height:10px;overflow:hidden"><div class="t" style="left:60.5px;top:2.9px;font-size:9.6px;color:#1d3cae;-webkit-text-stroke:0.15px #1d3cae;transform:scaleX(0.822);transform-origin:0 0">•Find a local restaurant with a meeting room (and no</div></div>
<div class="a" style="left:324px;top:288px;width:684px;height:487px;background:#f3f3f3"></div>
<div class="a" style="left:326px;top:295px;width:15px;height:16.5px;background:#fff;border:1px solid #b4b8bd"></div>
<svg style="left:331px;top:299px" width="7" height="9" viewBox="0 0 7 9"><path d="M1 0.5 V7.5 H6.5" fill="none" stroke="#222" stroke-width="2"/></svg>
<div class="a" style="left:414.5px;top:295px;width:508px;height:16px;background:#fff;border:1px solid #a9adb3"></div>
<svg style="left:0;top:0" width="1280" height="800"><rect x="419.22" y="301.5" width="1" height="2.5" fill="#555"/><rect x="424.24" y="300" width="1" height="5.5" fill="#444"/><rect x="429.26" y="301.5" width="1" height="2.5" fill="#555"/><text x="434.78" y="306.4" font-size="10.5" fill="#333" text-anchor="middle" font-family="Liberation Sans" transform="translate(434.78 0) scale(0.78 1) translate(-434.78 0)">1</text><rect x="439.30" y="301.5" width="1" height="2.5" fill="#555"/><rect x="444.32" y="300" width="1" height="5.5" fill="#444"/><rect x="449.34" y="301.5" width="1" height="2.5" fill="#555"/><text x="454.86" y="306.4" font-size="10.5" fill="#333" text-anchor="middle" font-family="Liberation Sans" transform="translate(454.86 0) scale(0.78 1) translate(-454.86 0)">2</text><rect x="459.38" y="301.5" width="1" height="2.5" fill="#555"/><rect x="464.40" y="300" width="1" height="5.5" fill="#444"/><rect x="469.42" y="301.5" width="1" height="2.5" fill="#555"/><text x="474.94" y="306.4" font-size="10.5" fill="#333" text-anchor="middle" font-family="Liberation Sans" transform="translate(474.94 0) scale(0.78 1) translate(-474.94 0)">3</text><rect x="479.46" y="301.5" width="1" height="2.5" fill="#555"/><rect x="484.48" y="300" width="1" height="5.5" fill="#444"/><rect x="489.50" y="301.5" width="1" height="2.5" fill="#555"/><text x="495.02" y="306.4" font-size="10.5" fill="#333" text-anchor="middle" font-family="Liberation Sans" transform="translate(495.02 0) scale(0.78 1) translate(-495.02 0)">4</text><rect x="499.54" y="301.5" width="1" height="2.5" fill="#555"/><rect x="504.56" y="300" width="1" height="5.5" fill="#444"/><rect x="509.58" y="301.5" width="1" height="2.5" fill="#555"/><text x="515.10" y="306.4" font-size="10.5" fill="#333" text-anchor="middle" font-family="Liberation Sans" transform="translate(515.10 0) scale(0.78 1) translate(-515.10 0)">5</text><rect x="519.62" y="301.5" width="1" height="2.5" fill="#555"/><rect x="524.64" y="300" width="1" height="5.5" fill="#444"/><rect x="529.66" y="301.5" width="1" height="2.5" fill="#555"/><text x="535.18" y="306.4" font-size="10.5" fill="#333" text-anchor="middle" font-family="Liberation Sans" transform="translate(535.18 0) scale(0.78 1) translate(-535.18 0)">6</text><rect x="539.70" y="301.5" width="1" height="2.5" fill="#555"/><rect x="544.72" y="300" width="1" height="5.5" fill="#444"/><rect x="549.74" y="301.5" width="1" height="2.5" fill="#555"/><text x="555.26" y="306.4" font-size="10.5" fill="#333" text-anchor="middle" font-family="Liberation Sans" transform="translate(555.26 0) scale(0.78 1) translate(-555.26 0)">7</text><rect x="559.78" y="301.5" width="1" height="2.5" fill="#555"/><rect x="564.80" y="300" width="1" height="5.5" fill="#444"/><rect x="569.82" y="301.5" width="1" height="2.5" fill="#555"/><text x="575.34" y="306.4" font-size="10.5" fill="#333" text-anchor="middle" font-family="Liberation Sans" transform="translate(575.34 0) scale(0.78 1) translate(-575.34 0)">8</text><rect x="579.86" y="301.5" width="1" height="2.5" fill="#555"/><rect x="584.88" y="300" width="1" height="5.5" fill="#444"/><rect x="589.90" y="301.5" width="1" height="2.5" fill="#555"/><text x="595.42" y="306.4" font-size="10.5" fill="#333" text-anchor="middle" font-family="Liberation Sans" transform="translate(595.42 0) scale(0.78 1) translate(-595.42 0)">9</text><rect x="599.94" y="301.5" width="1" height="2.5" fill="#555"/><rect x="604.96" y="300" width="1" height="5.5" fill="#444"/><rect x="609.98" y="301.5" width="1" height="2.5" fill="#555"/><text x="615.50" y="306.4" font-size="10.5" fill="#333" text-anchor="middle" font-family="Liberation Sans" transform="translate(615.50 0) scale(0.78 1) translate(-615.50 0)">10</text><rect x="620.02" y="301.5" width="1" height="2.5" fill="#555"/><rect x="625.04" y="300" width="1" height="5.5" fill="#444"/><rect x="630.06" y="301.5" width="1" height="2.5" fill="#555"/><text x="635.58" y="306.4" font-size="10.5" fill="#333" text-anchor="middle" font-family="Liberation Sans" transform="translate(635.58 0) scale(0.78 1) translate(-635.58 0)">11</text><rect x="640.10" y="301.5" width="1" height="2.5" fill="#555"/><rect x="645.12" y="300" width="1" height="5.5" fill="#444"/><rect x="650.14" y="301.5" width="1" height="2.5" fill="#555"/><text x="655.66" y="306.4" font-size="10.5" fill="#333" text-anchor="middle" font-family="Liberation Sans" transform="translate(655.66 0) scale(0.78 1) translate(-655.66 0)">12</text><rect x="660.18" y="301.5" width="1" height="2.5" fill="#555"/><rect x="665.20" y="300" width="1" height="5.5" fill="#444"/><rect x="670.22" y="301.5" width="1" height="2.5" fill="#555"/><text x="675.74" y="306.4" font-size="10.5" fill="#333" text-anchor="middle" font-family="Liberation Sans" transform="translate(675.74 0) scale(0.78 1) translate(-675.74 0)">13</text><rect x="680.26" y="301.5" width="1" height="2.5" fill="#555"/><rect x="685.28" y="300" width="1" height="5.5" fill="#444"/><rect x="690.30" y="301.5" width="1" height="2.5" fill="#555"/><text x="695.82" y="306.4" font-size="10.5" fill="#333" text-anchor="middle" font-family="Liberation Sans" transform="translate(695.82 0) scale(0.78 1) translate(-695.82 0)">14</text><rect x="700.34" y="301.5" width="1" height="2.5" fill="#555"/><rect x="705.36" y="300" width="1" height="5.5" fill="#444"/><rect x="710.38" y="301.5" width="1" height="2.5" fill="#555"/><text x="715.90" y="306.4" font-size="10.5" fill="#333" text-anchor="middle" font-family="Liberation Sans" transform="translate(715.90 0) scale(0.78 1) translate(-715.90 0)">15</text><rect x="720.42" y="301.5" width="1" height="2.5" fill="#555"/><rect x="725.44" y="300" width="1" height="5.5" fill="#444"/><rect x="730.46" y="301.5" width="1" height="2.5" fill="#555"/><text x="735.98" y="306.4" font-size="10.5" fill="#333" text-anchor="middle" font-family="Liberation Sans" transform="translate(735.98 0) scale(0.78 1) translate(-735.98 0)">16</text><rect x="740.50" y="301.5" width="1" height="2.5" fill="#555"/><rect x="745.52" y="300" width="1" height="5.5" fill="#444"/><rect x="750.54" y="301.5" width="1" height="2.5" fill="#555"/><text x="756.06" y="306.4" font-size="10.5" fill="#333" text-anchor="middle" font-family="Liberation Sans" transform="translate(756.06 0) scale(0.78 1) translate(-756.06 0)">17</text><rect x="760.58" y="301.5" width="1" height="2.5" fill="#555"/><rect x="765.60" y="300" width="1" height="5.5" fill="#444"/><rect x="770.62" y="301.5" width="1" height="2.5" fill="#555"/><text x="776.14" y="306.4" font-size="10.5" fill="#333" text-anchor="middle" font-family="Liberation Sans" transform="translate(776.14 0) scale(0.78 1) translate(-776.14 0)">18</text><rect x="780.66" y="301.5" width="1" height="2.5" fill="#555"/><rect x="785.68" y="300" width="1" height="5.5" fill="#444"/><rect x="790.70" y="301.5" width="1" height="2.5" fill="#555"/><text x="796.22" y="306.4" font-size="10.5" fill="#333" text-anchor="middle" font-family="Liberation Sans" transform="translate(796.22 0) scale(0.78 1) translate(-796.22 0)">19</text><rect x="800.74" y="301.5" width="1" height="2.5" fill="#555"/><rect x="805.76" y="300" width="1" height="5.5" fill="#444"/><rect x="810.78" y="301.5" width="1" height="2.5" fill="#555"/><text x="816.30" y="306.4" font-size="10.5" fill="#333" text-anchor="middle" font-family="Liberation Sans" transform="translate(816.30 0) scale(0.78 1) translate(-816.30 0)">20</text><rect x="820.82" y="301.5" width="1" height="2.5" fill="#555"/><rect x="825.84" y="300" width="1" height="5.5" fill="#444"/><rect x="830.86" y="301.5" width="1" height="2.5" fill="#555"/><text x="836.38" y="306.4" font-size="10.5" fill="#333" text-anchor="middle" font-family="Liberation Sans" transform="translate(836.38 0) scale(0.78 1) translate(-836.38 0)">21</text><rect x="840.90" y="301.5" width="1" height="2.5" fill="#555"/><rect x="845.92" y="300" width="1" height="5.5" fill="#444"/><rect x="850.94" y="301.5" width="1" height="2.5" fill="#555"/><text x="856.46" y="306.4" font-size="10.5" fill="#333" text-anchor="middle" font-family="Liberation Sans" transform="translate(856.46 0) scale(0.78 1) translate(-856.46 0)">22</text><rect x="860.98" y="301.5" width="1" height="2.5" fill="#555"/><rect x="866.00" y="300" width="1" height="5.5" fill="#444"/><rect x="871.02" y="301.5" width="1" height="2.5" fill="#555"/><text x="876.54" y="306.4" font-size="10.5" fill="#333" text-anchor="middle" font-family="Liberation Sans" transform="translate(876.54 0) scale(0.78 1) translate(-876.54 0)">23</text><rect x="881.06" y="301.5" width="1" height="2.5" fill="#555"/><rect x="886.08" y="300" width="1" height="5.5" fill="#444"/><rect x="891.10" y="301.5" width="1" height="2.5" fill="#555"/><text x="896.62" y="306.4" font-size="10.5" fill="#333" text-anchor="middle" font-family="Liberation Sans" transform="translate(896.62 0) scale(0.78 1) translate(-896.62 0)">24</text><rect x="901.14" y="301.5" width="1" height="2.5" fill="#555"/><rect x="906.16" y="300" width="1" height="5.5" fill="#444"/><rect x="911.18" y="301.5" width="1" height="2.5" fill="#555"/><text x="916.70" y="306.4" font-size="10.5" fill="#333" text-anchor="middle" font-family="Liberation Sans" transform="translate(916.70 0) scale(0.78 1) translate(-916.70 0)">25</text></svg>
<div class="a" style="left:327px;top:333.5px;width:13px;height:427px;background:#fff;border:1px solid #a9adb3"></div>
<svg style="left:0;top:0" width="1280" height="800"><rect x="332.5" y="337.06" width="2.5" height="1" fill="#555"/><rect x="331" y="342.68" width="6" height="1" fill="#444"/><rect x="332.5" y="348.29" width="2.5" height="1" fill="#555"/><text x="0" y="0" font-size="10.5" fill="#333" text-anchor="middle" font-family="Liberation Sans" transform="translate(337.3 354.40) rotate(-90) scale(0.85 1)">1</text><rect x="332.5" y="359.51" width="2.5" height="1" fill="#555"/><rect x="331" y="365.12" width="6" height="1" fill="#444"/><rect x="332.5" y="370.74" width="2.5" height="1" fill="#555"/><text x="0" y="0" font-size="10.5" fill="#333" text-anchor="middle" font-family="Liberation Sans" transform="translate(337.3 376.85) rotate(-90) scale(0.85 1)">2</text><rect x="332.5" y="381.96" width="2.5" height="1" fill="#555"/><rect x="331" y="387.57" width="6" height="1" fill="#444"/><rect x="332.5" y="393.19" width="2.5" height="1" fill="#555"/><text x="0" y="0" font-size="10.5" fill="#333" text-anchor="middle" font-family="Liberation Sans" transform="translate(337.3 399.30) rotate(-90) scale(0.85 1)">3</text><rect x="332.5" y="404.41" width="2.5" height="1" fill="#555"/><rect x="331" y="410.02" width="6" height="1" fill="#444"/><rect x="332.5" y="415.64" width="2.5" height="1" fill="#555"/><text x="0" y="0" font-size="10.5" fill="#333" text-anchor="middle" font-family="Liberation Sans" transform="translate(337.3 421.75) rotate(-90) scale(0.85 1)">4</text><rect x="332.5" y="426.86" width="2.5" height="1" fill="#555"/><rect x="331" y="432.48" width="6" height="1" fill="#444"/><rect x="332.5" y="438.09" width="2.5" height="1" fill="#555"/><text x="0" y="0" font-size="10.5" fill="#333" text-anchor="middle" font-family="Liberation Sans" transform="translate(337.3 444.20) rotate(-90) scale(0.85 1)">5</text><rect x="332.5" y="449.31" width="2.5" height="1" fill="#555"/><rect x="331" y="454.93" width="6" height="1" fill="#444"/><rect x="332.5" y="460.54" width="2.5" height="1" fill="#555"/><text x="0" y="0" font-size="10.5" fill="#333" text-anchor="middle" font-family="Liberation Sans" transform="translate(337.3 466.65) rotate(-90) scale(0.85 1)">6</text><rect x="332.5" y="471.76" width="2.5" height="1" fill="#555"/><rect x="331" y="477.38" width="6" height="1" fill="#444"/><rect x="332.5" y="482.99" width="2.5" height="1" fill="#555"/><text x="0" y="0" font-size="10.5" fill="#333" text-anchor="middle" font-family="Liberation Sans" transform="translate(337.3 489.10) rotate(-90) scale(0.85 1)">7</text><rect x="332.5" y="494.21" width="2.5" height="1" fill="#555"/><rect x="331" y="499.83" width="6" height="1" fill="#444"/><rect x="332.5" y="505.44" width="2.5" height="1" fill="#555"/><text x="0" y="0" font-size="10.5" fill="#333" text-anchor="middle" font-family="Liberation Sans" transform="translate(337.3 511.55) rotate(-90) scale(0.85 1)">8</text><rect x="332.5" y="516.66" width="2.5" height="1" fill="#555"/><rect x="331" y="522.27" width="6" height="1" fill="#444"/><rect x="332.5" y="527.89" width="2.5" height="1" fill="#555"/><text x="0" y="0" font-size="10.5" fill="#333" text-anchor="middle" font-family="Liberation Sans" transform="translate(337.3 534.00) rotate(-90) scale(0.85 1)">9</text><rect x="332.5" y="539.11" width="2.5" height="1" fill="#555"/><rect x="331" y="544.73" width="6" height="1" fill="#444"/><rect x="332.5" y="550.34" width="2.5" height="1" fill="#555"/><text x="0" y="0" font-size="10.5" fill="#333" text-anchor="middle" font-family="Liberation Sans" transform="translate(337.3 556.45) rotate(-90) scale(0.85 1)">10</text><rect x="332.5" y="561.56" width="2.5" height="1" fill="#555"/><rect x="331" y="567.18" width="6" height="1" fill="#444"/><rect x="332.5" y="572.79" width="2.5" height="1" fill="#555"/><text x="0" y="0" font-size="10.5" fill="#333" text-anchor="middle" font-family="Liberation Sans" transform="translate(337.3 578.90) rotate(-90) scale(0.85 1)">11</text><rect x="332.5" y="584.01" width="2.5" height="1" fill="#555"/><rect x="331" y="589.62" width="6" height="1" fill="#444"/><rect x="332.5" y="595.24" width="2.5" height="1" fill="#555"/><text x="0" y="0" font-size="10.5" fill="#333" text-anchor="middle" font-family="Liberation Sans" transform="translate(337.3 601.35) rotate(-90) scale(0.85 1)">12</text><rect x="332.5" y="606.46" width="2.5" height="1" fill="#555"/><rect x="331" y="612.07" width="6" height="1" fill="#444"/><rect x="332.5" y="617.69" width="2.5" height="1" fill="#555"/><text x="0" y="0" font-size="10.5" fill="#333" text-anchor="middle" font-family="Liberation Sans" transform="translate(337.3 623.80) rotate(-90) scale(0.85 1)">13</text><rect x="332.5" y="628.91" width="2.5" height="1" fill="#555"/><rect x="331" y="634.52" width="6" height="1" fill="#444"/><rect x="332.5" y="640.14" width="2.5" height="1" fill="#555"/><text x="0" y="0" font-size="10.5" fill="#333" text-anchor="middle" font-family="Liberation Sans" transform="translate(337.3 646.25) rotate(-90) scale(0.85 1)">14</text><rect x="332.5" y="651.36" width="2.5" height="1" fill="#555"/><rect x="331" y="656.98" width="6" height="1" fill="#444"/><rect x="332.5" y="662.59" width="2.5" height="1" fill="#555"/><text x="0" y="0" font-size="10.5" fill="#333" text-anchor="middle" font-family="Liberation Sans" transform="translate(337.3 668.70) rotate(-90) scale(0.85 1)">15</text><rect x="332.5" y="673.81" width="2.5" height="1" fill="#555"/><rect x="331" y="679.43" width="6" height="1" fill="#444"/><rect x="332.5" y="685.04" width="2.5" height="1" fill="#555"/><text x="0" y="0" font-size="10.5" fill="#333" text-anchor="middle" font-family="Liberation Sans" transform="translate(337.3 691.15) rotate(-90) scale(0.85 1)">16</text><rect x="332.5" y="696.26" width="2.5" height="1" fill="#555"/><rect x="331" y="701.88" width="6" height="1" fill="#444"/><rect x="332.5" y="707.49" width="2.5" height="1" fill="#555"/><text x="0" y="0" font-size="10.5" fill="#333" text-anchor="middle" font-family="Liberation Sans" transform="translate(337.3 713.60) rotate(-90) scale(0.85 1)">17</text><rect x="332.5" y="718.71" width="2.5" height="1" fill="#555"/><rect x="331" y="724.32" width="6" height="1" fill="#444"/><rect x="332.5" y="729.94" width="2.5" height="1" fill="#555"/><text x="0" y="0" font-size="10.5" fill="#333" text-anchor="middle" font-family="Liberation Sans" transform="translate(337.3 736.05) rotate(-90) scale(0.85 1)">18</text><rect x="332.5" y="741.16" width="2.5" height="1" fill="#555"/><rect x="331" y="746.77" width="6" height="1" fill="#444"/><rect x="332.5" y="752.39" width="2.5" height="1" fill="#555"/></svg>
<div class="a" style="left:414.5px;top:333px;width:508.5px;height:427px;background:#fff"></div>
<div class="a" style="left:414.5px;top:333px;width:366.5px;height:75px;background:#fcc900"></div>
<div class="a" style="left:414.5px;top:408px;width:366.5px;height:352px;background:#0336ae"></div>
<div class="a" style="left:434px;top:333px;width:1px;height:75px;background:#fde27a"></div>
<div class="a" style="left:434px;top:408px;width:1px;height:352px;background:#4d6fc4"></div>
<div class="t" style="left:459.0px;top:390.6px;font-size:7.54px;color:#22449c;font-weight:bold;transform:scaleX(0.753);transform-origin:0 0;">American Chemical Society</div>
<div class="t" style="left:456.5px;top:451.7px;font-size:24.55px;color:#ffffff;font-weight:bold;transform:scaleX(0.932);transform-origin:0 0;">A Suggestion for Your</div>
<div class="t" style="left:456.5px;top:479.9px;font-size:24.69px;color:#ffffff;font-weight:bold;transform:scaleX(0.917);transform-origin:0 0;">Local Section Seniors Group</div>
<div class="t" style="left:460.5px;top:678.2px;font-size:17.83px;color:#e6eaf5;transform:scaleX(0.951);transform-origin:0 0;">Set up a regular seniors social meeting</div>
<svg style="left:797px;top:416px" width="34" height="37" viewBox="0 0 34 37">
<path d="M0.4 17 L17 0.3 L33.6 17 Z" fill="#f3c500"/>
<path d="M9 17 Q10 9 14 7 L15 3 L17 0.5 L19.5 2 L19 6 Q24 8 26 17 Z" fill="#f7cf1a"/>
<path d="M12 15 Q17 9 22 15 Z" fill="#e2b800"/>
<path d="M0.4 17 H33.6 L17 36 Z" fill="#1753b3"/>
<text x="6.3" y="25" font-size="7" font-weight="bold" fill="#f3c500" font-family="Liberation Sans">A</text>
<text x="22" y="25" font-size="7" font-weight="bold" fill="#f3c500" font-family="Liberation Sans">C</text>
<text x="14.6" y="32.5" font-size="6" font-weight="bold" fill="#f3c500" font-family="Liberation Sans">S</text>
<path d="M14.5 18.5 H19.5 M17 18.5 V20.5 L14.3 26 H19.7 L17 20.5" fill="none" stroke="#f3c500" stroke-width="1.3"/>
</svg>
<svg style="left:797px;top:734px" width="102" height="21" viewBox="0 0 102 21"><rect x="1.25" y="1.25" width="99.5" height="18.8" fill="none" stroke="#666" stroke-width="1.1" stroke-dasharray="1.3 2.7"/></svg>
<div class="t" style="left:803.5px;top:740.7px;font-size:13.24px;color:#222;transform:scaleX(0.952);transform-origin:0 0;">Slide number</div>
<div class="a" style="left:992.8px;top:289.5px;width:13px;height:14px;background:#f6f6f6;border:1px solid #d4d4d4;border-radius:1.5px"></div>
<svg style="left:996px;top:294px" width="8" height="5" viewBox="0 0 8 5"><path d="M0.5 4.5 L3.8 0.5 L7 4.5 Z" fill="#9a9a9a"/></svg>
<div class="a" style="left:992.8px;top:306px;width:13px;height:56px;background:#f3f3f3;border:1px solid #d4d4d4;border-radius:1.5px"></div>
<svg style="left:996.5px;top:326px" width="6" height="16" viewBox="0 0 6 16"><rect x="0" y="0" width="5" height="1" fill="#cdcdcd"/><rect x="0" y="2" width="5" height="1" fill="#cdcdcd"/><rect x="0" y="4" width="5" height="1" fill="#cdcdcd"/><rect x="0" y="6" width="5" height="1" fill="#cdcdcd"/><rect x="0" y="8" width="5" height="1" fill="#cdcdcd"/><rect x="0" y="10" width="5" height="1" fill="#cdcdcd"/><rect x="0" y="12" width="5" height="1" fill="#cdcdcd"/><rect x="0" y="14" width="5" height="1" fill="#cdcdcd"/></svg>
<div class="a" style="left:993px;top:759.5px;width:13px;height:14px;background:#f6f6f6;border:1px solid #d4d4d4;border-radius:2px"></div>
<svg style="left:996px;top:764px" width="8" height="5" viewBox="0 0 8 5"><path d="M0.5 0.5 L3.8 4.5 L7 0.5 Z" fill="#9a9a9a"/></svg>
<div class="a" style="left:1008px;top:288px;width:1px;height:487px;background:#cfcfcf"></div>
<div class="a" style="left:1009px;top:288px;width:229px;height:487px;background:#f4f4f4"></div>
<div class="t" style="left:1024.5px;top:299.9px;font-size:11.32px;color:#333;font-weight:bold;transform:scaleX(0.948);transform-origin:0 0;">Fill</div>
<div class="a" style="left:1024.5px;top:314.5px;width:202.5px;height:25.5px;background:#fff;border:1px solid #d2d2d2;border-radius:2px"></div>
<div class="t" style="left:1028.8px;top:321.5px;font-size:13.03px;color:#333;transform:scaleX(0.861);transform-origin:0 0;">Color Fill</div>
<svg style="left:1215px;top:327px" width="6" height="4"><path d="M0.3 0.3 L3.0 3.5 L5.7 0.3" fill="none" stroke="#8a8a8a" stroke-width="1"/></svg>
<div class="a" style="left:1024.5px;top:350px;width:46px;height:26px;background:#fff;border:1px solid #d2d2d2;border-radius:2px"></div>
<div class="t" style="left:1024.5px;top:389.3px;font-size:12.00px;color:#333;font-weight:bold;transform:scaleX(0.944);transform-origin:0 0;">Effect</div>
<div class="a" style="left:1024.5px;top:405px;width:202.5px;height:25px;background:#fff;border:1px solid #d2d2d2;border-radius:2px"></div>
<div class="t" style="left:1028.8px;top:411.5px;font-size:12.35px;color:#333;transform:scaleX(0.907);transform-origin:0 0;">None</div>
<svg style="left:1215px;top:417px" width="6" height="4"><path d="M0.3 0.3 L3.0 3.5 L5.7 0.3" fill="none" stroke="#8a8a8a" stroke-width="1"/></svg>
<div class="a" style="left:1024.5px;top:439.5px;width:202.5px;height:25px;background:#f9f9f9;border:1px solid #dcdcdc;border-radius:2px"></div>
<svg style="left:1215px;top:452px" width="6" height="4"><path d="M0.3 0.3 L3.0 3.5 L5.7 0.3" fill="none" stroke="#aaa" stroke-width="1"/></svg>
<div class="t" style="left:1024.5px;top:481.5px;font-size:12.35px;color:#333;transform:scaleX(0.921);transform-origin:0 0;">Duration</div>
<div class="a" style="left:1071.5px;top:475.5px;width:67px;height:24px;background:#f9f9f9;border:1px solid #dcdcdc;border-radius:2px"></div>
<div class="t" style="left:1102.5px;top:481.0px;font-size:13.03px;color:#666;transform:scaleX(0.862);transform-origin:0 0;">2 s</div>
<svg style="left:1127px;top:479px" width="7" height="16" viewBox="0 0 7 16"><path d="M0.5 4 L3.5 1 L6.5 4 M0.5 12 L3.5 15 L6.5 12" fill="none" stroke="#aaa" stroke-width="0.9"/></svg>
<div class="a" style="left:1154px;top:475.5px;width:73px;height:24px;background:#f9f9f9;border:1px solid #dcdcdc;border-radius:2px"></div>
<div class="t" style="left:1170.5px;top:481.5px;font-size:12.35px;color:#666;transform:scaleX(0.899);transform-origin:0 0;">Preview</div>
<div class="a" style="left:1024.5px;top:509.5px;width:202.5px;height:1.5px;background:#d6d6d6"></div>
<div class="a" style="left:1024.5px;top:522px;width:13.5px;height:14px;background:#fff;border:1px solid #cfcfcf"></div>
<svg style="left:1025px;top:519px" width="12" height="13" viewBox="0 0 12 13"><path d="M1.5 7 L4.5 11 L10.5 1" fill="none" stroke="#333" stroke-width="1.9"/></svg>
<div class="t" style="left:1047.5px;top:522.3px;font-size:12.69px;color:#333;transform:scaleX(0.909);transform-origin:0 0;">Start On Click</div>
<div class="a" style="left:1024.5px;top:550.5px;width:13.5px;height:14.5px;background:#fff;border:1px solid #cfcfcf"></div>
<div class="t" style="left:1047.5px;top:551.5px;font-size:12.35px;color:#333;transform:scaleX(0.896);transform-origin:0 0;">Delay</div>
<div class="a" style="left:1154px;top:547.5px;width:73px;height:24.5px;background:#f9f9f9;border:1px solid #dcdcdc;border-radius:2px"></div>
<div class="t" style="left:1185.0px;top:554.0px;font-size:12.35px;color:#666;transform:scaleX(0.889);transform-origin:0 0;">10 s</div>
<svg style="left:1214px;top:551px" width="7" height="16" viewBox="0 0 7 16"><path d="M0.5 4 L3.5 1 L6.5 4 M0.5 12 L3.5 15 L6.5 12" fill="none" stroke="#aaa" stroke-width="0.9"/></svg>
<div class="a" style="left:1024.5px;top:582px;width:202.5px;height:1.5px;background:#d6d6d6"></div>
<div class="a" style="left:1024.5px;top:592.5px;width:202.5px;height:25px;background:#fff;border:1px solid #d2d2d2;border-radius:2px"></div>
<div class="t" style="left:1079.2px;top:599.3px;font-size:12.00px;color:#333;transform:scaleX(0.969);transform-origin:0 0;">Apply to All Slides</div>
<div class="a" style="left:1237px;top:288px;width:1px;height:487px;background:#cfcfcf"></div>
<div class="a" style="left:1238px;top:288px;width:40px;height:487px;background:#f4f4f4"></div>
<div class="a" style="left:1238px;top:305px;width:40px;height:36px;background:#7b8591"></div>
<svg style="left:1252px;top:316px" width="15" height="16" viewBox="0 0 15 16"><rect x="0.6" y="0.6" width="13.8" height="14.8" rx="1.5" fill="none" stroke="#fff" stroke-width="1.2"/><rect x="2.6" y="3" width="9.8" height="8" fill="none" stroke="#fff" stroke-width="1.4"/><rect x="2" y="12.4" width="11" height="1" fill="#fff"/></svg>
<svg style="left:1252px;top:361px" width="16" height="17" viewBox="0 0 16 17"><path d="M0.6 12 V0.6 H10 V6" fill="none" stroke="#cdcdcd" stroke-width="1.1"/><ellipse cx="10.5" cy="12" rx="4.5" ry="3.8" fill="#f4f4f4" stroke="#cdcdcd" stroke-width="1.1"/></svg>
<svg style="left:1252px;top:407px" width="15" height="16" viewBox="0 0 15 16"><rect x="0.6" y="0.6" width="13.8" height="14.8" fill="none" stroke="#cdcdcd" stroke-width="1.1"/><path d="M2.5 13 V2.5 H12.5 V5 Q8 6 6 9 Z" fill="#cdcdcd"/></svg>
<svg style="left:1252px;top:453px" width="15" height="16" viewBox="0 0 15 16"><rect x="0.6" y="0.6" width="13.8" height="14.8" fill="none" stroke="#cdcdcd" stroke-width="1.1"/><path d="M3.5 3.5 H11.5 M7.5 3.5 V13" stroke="#cdcdcd" stroke-width="1.2"/></svg>
<svg style="left:1252px;top:497px" width="15" height="18" viewBox="0 0 15 18"><rect x="0.6" y="0.6" width="13.8" height="16.8" fill="none" stroke="#cdcdcd" stroke-width="1.1"/><path d="M0.6 5 H14.4 M0.6 9 H14.4 M0.6 13 H14.4 M7.5 0.6 V17.4" stroke="#cdcdcd" stroke-width="1"/></svg>
<svg style="left:1252px;top:543px" width="15" height="17" viewBox="0 0 15 17"><rect x="0.6" y="0.6" width="13.8" height="15.8" fill="none" stroke="#cdcdcd" stroke-width="1.1"/><rect x="3.5" y="10.5" width="1.5" height="3" fill="#cdcdcd"/><rect x="6.8" y="7.5" width="1.5" height="6" fill="#cdcdcd"/><rect x="10" y="4" width="1.5" height="9.5" fill="#cdcdcd"/></svg>
<svg style="left:1253px;top:591px" width="14" height="18" viewBox="0 0 14 18"><text x="0" y="10" font-size="11" fill="#cdcdcd" font-family="Liberation Sans">Ta</text><path d="M1 16 Q7 11 13 16" fill="none" stroke="#cdcdcd" stroke-width="1"/></svg>
<div class="a" style="left:1px;top:775px;width:1277px;height:1px;background:#e2e2e2"></div>
<div class="a" style="left:1px;top:776px;width:1277px;height:1px;background:#cfcfcf"></div>
<div class="a" style="left:1px;top:777px;width:1277px;height:22px;background:#f1f1f1"></div>
<svg style="left:14.3px;top:785px" width="14" height="16" viewBox="0 0 14 16"><rect x="0.6" y="0.6" width="12.8" height="15" rx="0.8" fill="#fff" stroke="#4a4a4a" stroke-width="1.2"/><path d="M4.5 3.6 L10.6 8.2 L4.5 12.6 Z" fill="#333"/></svg>
<div class="t" style="left:42.0px;top:785.5px;font-size:12.35px;color:#444;font-weight:bold;transform:scaleX(0.920);transform-origin:0 0;">Slide 1 of 8</div>
<div class="a" style="left:1048px;top:779px;width:21px;height:21px;background:#7b8187"></div>
<svg style="left:1052px;top:783px" width="14" height="15" viewBox="0 0 14 15"><rect x="0.5" y="0.5" width="13" height="14" rx="1" fill="none" stroke="#eee" stroke-width="1"/><g fill="none" stroke="#eee" stroke-width="1"><rect x="3" y="3" width="3" height="3"/><rect x="8" y="3" width="3" height="3"/><rect x="3" y="9" width="3" height="3"/><rect x="8" y="9" width="3" height="3"/></g></svg>
<svg style="left:1085px;top:784px" width="15" height="16" viewBox="0 0 15 16"><rect x="0.7" y="0.7" width="13.6" height="14.6" fill="none" stroke="#444" stroke-width="1.3"/><rect x="3" y="5" width="9" height="5" fill="none" stroke="#444" stroke-width="1.3"/></svg>
<svg style="left:1117px;top:782px" width="17" height="17" viewBox="0 0 17 17"><circle cx="8.5" cy="8.5" r="7.8" fill="none" stroke="#555" stroke-width="1"/><rect x="5.5" y="8" width="6" height="1.3" fill="#444"/></svg>
<div class="t" style="left:1145.5px;top:784.8px;font-size:12.69px;color:#444;font-weight:bold;transform:scaleX(0.930);transform-origin:0 0;">Zoom 51%</div>
<svg style="left:1218px;top:782px" width="17" height="17" viewBox="0 0 17 17"><circle cx="8.5" cy="8.5" r="7.8" fill="none" stroke="#555" stroke-width="1"/><rect x="5.5" y="8" width="6" height="1.3" fill="#444"/><rect x="7.85" y="5.5" width="1.3" height="6" fill="#444"/></svg>
<div class="a" style="left:0;top:799px;width:1280px;height:1px;background:#fff"></div>
<div class="a" style="left:0;top:129px;width:1.2px;height:670px;background:#8a8a8a"></div>
<div class="a" style="left:1278.8px;top:129px;width:1.2px;height:670px;background:#9a9a9a"></div>
</body></html>
